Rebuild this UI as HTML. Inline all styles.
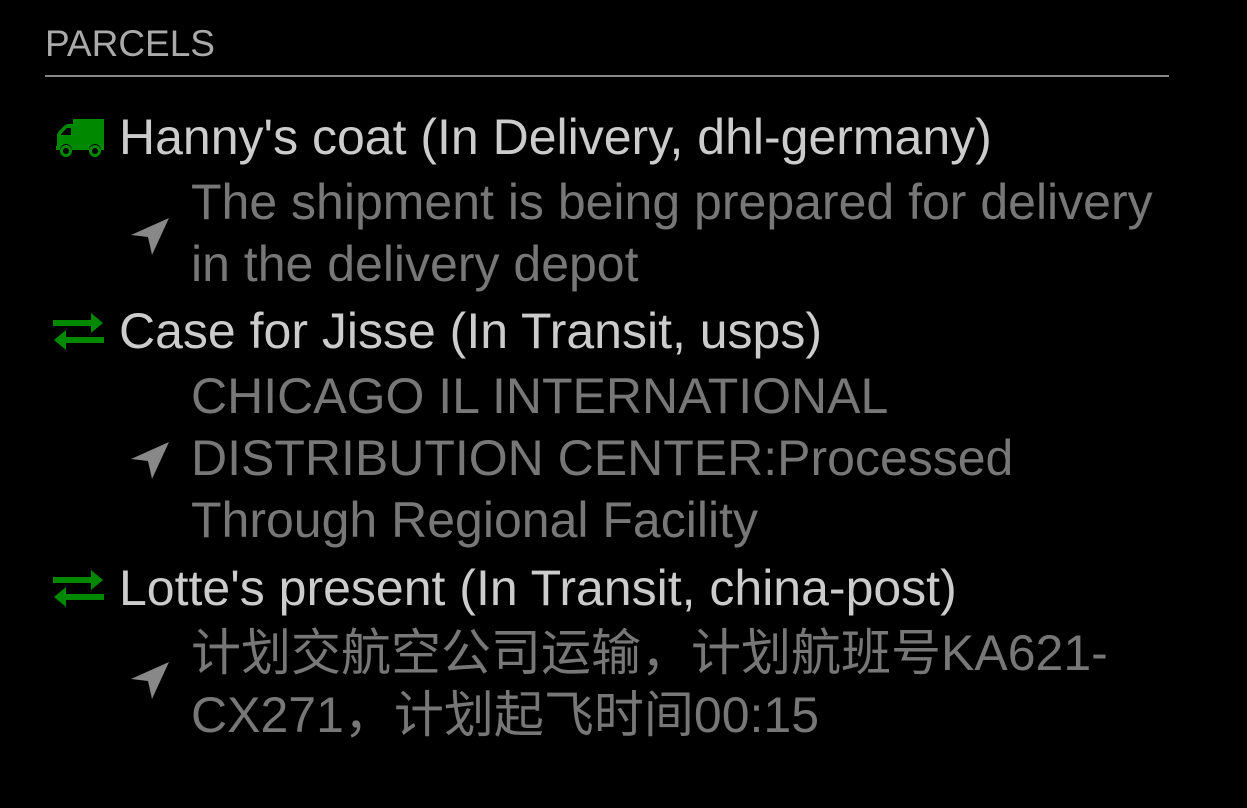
<!DOCTYPE html>
<html><head><meta charset="utf-8"><style>
html,body{margin:0;padding:0;background:#000;width:1247px;height:808px;overflow:hidden;font-family:"Liberation Sans","Noto Sans CJK SC",sans-serif;}
.h{position:absolute;left:45px;top:24px;font-size:37px;color:#aaa;line-height:40px;}
.rule{position:absolute;left:45px;top:75px;width:1124px;height:2px;background:#888;}
.item{position:absolute;left:0;width:1247px;}
.t{position:absolute;left:119px;top:0;font-size:50px;line-height:68px;color:#ccc;white-space:nowrap;}
.s{position:absolute;left:191px;top:68px;width:975px;font-size:50px;line-height:62px;color:#777;}
.ic{position:absolute;}
</style></head><body>
<div class="h">PARCELS</div>
<div class="rule"></div>

<div class="item" style="top:103px">
 <svg class="ic" style="left:55px;top:15px" width="49" height="40" viewBox="0 0 49 40">
  <path fill="#080" d="M18 1h31v31h-3a6 6 0 0 0-12 0H17a6 6 0 0 0-12 0H1v-4h1V18q0-3 2-5l5-5q2-2 5-2h4z"/>
  <path fill="#000" d="M6 17h10V10h-4l-6 6z"/>
  <circle cx="11" cy="33" r="4.5" fill="none" stroke="#080" stroke-width="3"/>
  <circle cx="40" cy="33" r="4.5" fill="none" stroke="#080" stroke-width="3"/>
 </svg>
 <div class="t">Hanny's coat (In Delivery, dhl-germany)</div>
 <svg class="ic" style="left:130px;top:113px" width="40" height="40" viewBox="0 0 40 40"><path fill="#888" d="M39 2L1 19l17 2 4 18z"/></svg>
 <div class="s">The shipment is being prepared for delivery in the delivery depot</div>
</div>

<div class="item" style="top:297px">
 <svg class="ic" style="left:53px;top:16px" width="51" height="38" viewBox="0 0 51 38"><path fill="#080" d="M0 7h38V0l12 10-12 10v-7H0z M51 24H13v-7L1 27l12 10v-7h38z"/></svg>
 <div class="t">Case for Jisse (In Transit, usps)</div>
 <svg class="ic" style="left:130px;top:143px" width="40" height="40" viewBox="0 0 40 40"><path fill="#888" d="M39 2L1 19l17 2 4 18z"/></svg>
 <div class="s">CHICAGO IL INTERNATIONAL DISTRIBUTION CENTER:Processed Through Regional Facility</div>
</div>

<div class="item" style="top:554px">
 <svg class="ic" style="left:53px;top:16px" width="51" height="38" viewBox="0 0 51 38"><path fill="#080" d="M0 7h38V0l12 10-12 10v-7H0z M51 24H13v-7L1 27l12 10v-7h38z"/></svg>
 <div class="t">Lotte's present (In Transit, china-post)</div>
 <svg class="ic" style="left:130px;top:106px" width="40" height="40" viewBox="0 0 40 40"><path fill="#888" d="M39 2L1 19l17 2 4 18z"/></svg>
 <div class="s">计划交航空公司运输，计划航班号KA621-CX271，计划起飞时间00:15</div>
</div>
</body></html>
